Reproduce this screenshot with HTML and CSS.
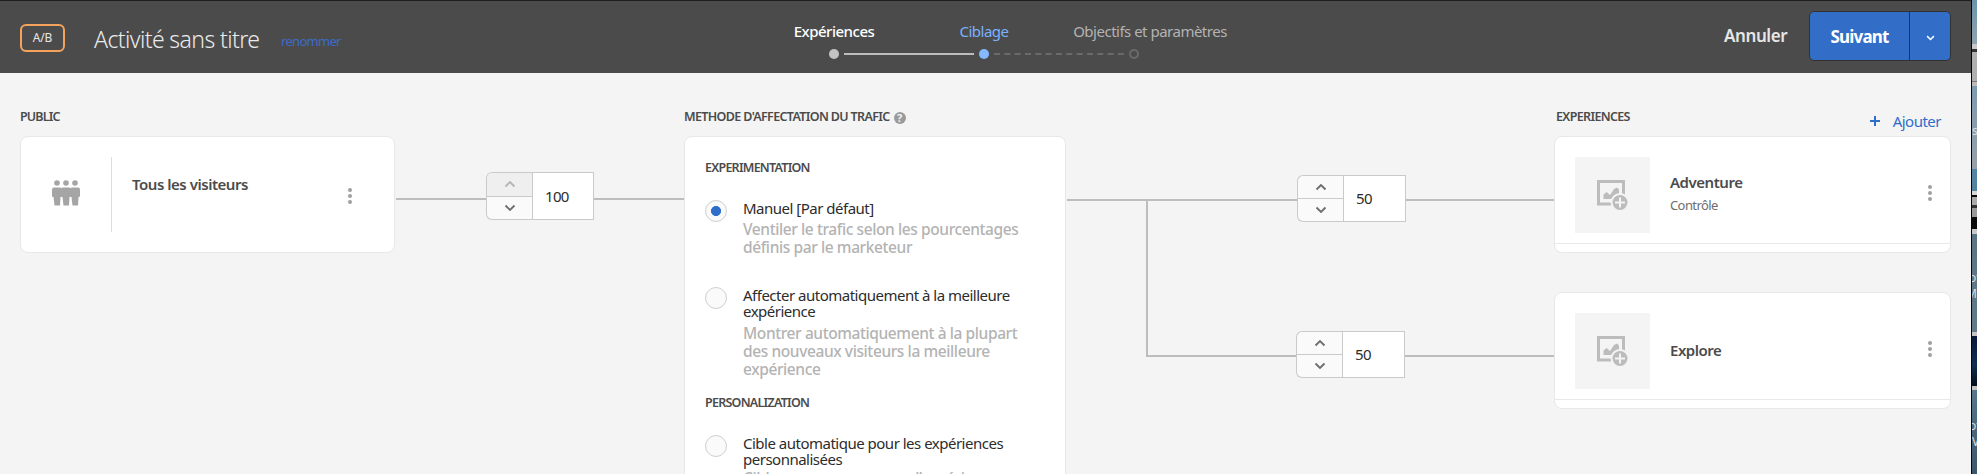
FILE: index.html
```html
<!DOCTYPE html>
<html lang="fr">
<head>
<meta charset="utf-8">
<title>Activité sans titre</title>
<link rel="stylesheet" href="styles.css">
</head>
<body>
<svg class="defs" width="0" height="0">
  <symbol id="up" viewBox="0 0 12 8"><path d="M1.5 6.5 6 2l4.500 4.500" fill="none" stroke="currentColor" stroke-width="1.900"/></symbol>
  <symbol id="down" viewBox="0 0 12 8"><path d="M1.500 1.500 6 6l4.500-4.500" fill="none" stroke="currentColor" stroke-width="1.900"/></symbol>
  <symbol id="more" viewBox="0 0 4 16"><circle cx="2" cy="2" r="2"/><circle cx="2" cy="8" r="2"/><circle cx="2" cy="14" r="2"/></symbol>
  <symbol id="person" viewBox="0 0 10 26"><circle cx="5" cy="3" r="2.800"/><path d="M2 7.500h6q2 0 2 2V16q0 1-1.500 1L8 25.500H2.500L1.500 17Q0 17 0 16V9.500q0-2 2-2z"/></symbol>
  <symbol id="image-add" viewBox="0 0 32 32">
    <path d="M2.500 2.500h25v22.500h-25z" fill="none" stroke="#bcbcbc" stroke-width="3"/>
    <path d="M7.500 20v-4.500l3-2.500 3.500 3 4-6 3-1.500 2 2V20z" fill="#bcbcbc"/>
    <circle cx="24" cy="23.500" r="9.500" fill="#f4f4f4"/>
    <circle cx="24" cy="23.500" r="7.500" fill="#bcbcbc"/>
    <path d="M24 18.500v10M19 23.500h10" stroke="#f4f4f4" stroke-width="2"/>
  </symbol>
</svg>
<div class="screen">
  <div class="app">
    <header class="header">
      <span class="badge">A/B</span>
      <h1 class="title">Activité sans titre</h1>
      <a class="rename">renommer</a>
      <nav class="steps">
        <div class="step done"><span>Expériences</span></div>
        <div class="step current"><span>Ciblage</span></div>
        <div class="step next"><span>Objectifs et paramètres</span></div>
        <svg class="track" width="310" height="10" viewBox="0 0 310 10">
          <circle cx="5" cy="5" r="5" fill="#c3c3c3"/>
          <path d="M15 5h130" stroke="#bdbdbd" stroke-width="2"/>
          <circle cx="155" cy="5" r="5" fill="#85b9ff"/>
          <path d="M165 5h130" stroke="#6a6a6a" stroke-width="2" stroke-dasharray="6 4.330"/>
          <circle cx="305" cy="5" r="4" fill="none" stroke="#6a6a6a" stroke-width="2"/>
        </svg>
      </nav>
      <a class="cancel">Annuler</a>
      <div class="split">
        <button class="go">Suivant</button>
        <button class="drop"><svg width="9" height="6"><use href="#down"/></svg></button>
      </div>
    </header>

    <main class="flow">
      <section class="col audience">
        <h2 class="head short">PUBLIC</h2>
        <div class="card people">
          <div class="people-icon">
            <svg width="28" height="26" viewBox="0 0 28 26" fill="#a5a5a5"><use href="#person" x="0" width="10" height="26"/><use href="#person" x="9" width="10" height="26"/><use href="#person" x="18" width="10" height="26"/></svg>
          </div>
          <div class="name">Tous les visiteurs</div>
          <svg class="more" width="4" height="16"><use href="#more"/></svg>
        </div>
      </section>

      <div class="link first">
        <i class="line"></i>
        <div class="stepper">
          <div class="arrows">
            <span class="off"><svg width="12" height="8"><use href="#up"/></svg></span>
            <span><svg width="12" height="8"><use href="#down"/></svg></span>
          </div>
          <div class="value">100</div>
        </div>
        <i class="line"></i>
      </div>

      <section class="col method">
        <h2 class="head">METHODE D'AFFECTATION DU TRAFIC <span class="help">?</span></h2>
        <div class="card options">
          <h3 class="group">EXPERIMENTATION</h3>
          <div class="option">
            <span class="radio on"></span>
            <div>
              <p class="label">Manuel [Par défaut]</p>
              <p class="desc">Ventiler le trafic selon les pourcentages<br>définis par le marketeur</p>
            </div>
          </div>
          <div class="option second">
            <span class="radio"></span>
            <div>
              <p class="label">Affecter automatiquement à la meilleure<br>expérience</p>
              <p class="desc">Montrer automatiquement à la plupart<br>des nouveaux visiteurs la meilleure<br>expérience</p>
            </div>
          </div>
          <h3 class="group later">PERSONALIZATION</h3>
          <div class="option third">
            <span class="radio"></span>
            <div>
              <p class="label">Cible automatique pour les expériences<br>personnalisées</p>
              <p class="desc">Cible par personne avec l’expérience</p>
            </div>
          </div>
        </div>
      </section>

      <div class="fork">
        <i class="trunk"></i>
        <div class="branches">
          <div class="link top">
            <i class="line"></i>
            <div class="stepper">
              <div class="arrows">
                <span><svg width="12" height="8"><use href="#up"/></svg></span>
                <span><svg width="12" height="8"><use href="#down"/></svg></span>
              </div>
              <div class="value">50</div>
            </div>
            <i class="line"></i>
          </div>
          <div class="link bottom">
            <i class="line"></i>
            <div class="stepper">
              <div class="arrows">
                <span><svg width="12" height="8"><use href="#up"/></svg></span>
                <span><svg width="12" height="8"><use href="#down"/></svg></span>
              </div>
              <div class="value">50</div>
            </div>
            <i class="line"></i>
          </div>
        </div>
      </div>

      <section class="col experiences">
        <div class="bar">
          <h2 class="head">EXPERIENCES</h2>
          <a class="add"><svg width="10" height="10" viewBox="0 0 10 10"><path d="M5 0v10M0 5h10" stroke="#2f6dca" stroke-width="2"/></svg>Ajouter</a>
        </div>
        <div class="card exp">
          <div class="exp-body">
            <div class="thumb"><svg width="32" height="32"><use href="#image-add"/></svg></div>
            <div class="exp-text"><div class="name">Adventure</div><div class="sub">Contrôle</div></div>
            <svg class="more" width="4" height="16"><use href="#more"/></svg>
          </div>
        </div>
        <div class="card exp">
          <div class="exp-body">
            <div class="thumb"><svg width="32" height="32"><use href="#image-add"/></svg></div>
            <div class="exp-text single"><div class="name">Explore</div></div>
            <svg class="more" width="4" height="16"><use href="#more"/></svg>
          </div>
        </div>
      </section>
    </main>
  </div>
  <aside class="desktop">
    <span class="glyph g1">s</span>
    <span class="glyph g2">of</span>
    <span class="glyph g3">M</span>
    <span class="glyph g4">of</span>
    <span class="glyph g5">V</span>
  </aside>
</div>
</body>
</html>
```
FILE: styles.css
```css
* { box-sizing: border-box; }
body { margin: 0; height: 474px; overflow: hidden; font-family: "Noto Sans", "Open Sans", sans-serif; color: #4b4b4b; }
h1, h2, h3, p { margin: 0; }
button { border: 0; padding: 0; font-family: inherit; }
svg { display: block; }
.defs { position: absolute; }
.screen { display: flex; height: 474px; overflow: hidden; white-space: nowrap; }
.app { width: 1971px; flex: none; background: #f4f4f4; }

.header { display: flex; align-items: flex-start; height: 73px; padding-left: 20px; border-top: 1px solid #1e1e1e; background: #4b4b4b; }
.badge { width: 45px; height: 28px; margin-top: 23px; border: 2px solid #f5a35c; border-radius: 6px; text-align: center; font-size: 12px; letter-spacing: -0.2px; line-height: 24px; color: #e6e6e6; }
.title { width: 187px; margin-left: 29px; font-size: 23px; font-weight: 300; letter-spacing: -0.6px; line-height: 76px; color: #eaeaea; }
.rename { width: 60px; margin-top: 2px; font-size: 13px; letter-spacing: -0.7px; line-height: 77px; color: #3b6cc9; }
.steps { display: grid; grid-template-columns: 150px 150px 182px; width: 482px; margin: 19px 0 0 418px; font-size: 15px; letter-spacing: -0.5px; line-height: 23px; text-align: center; }
.step.done { font-weight: 500; color: #fff; }
.step.current { color: #7ab2ff; }
.step.next { color: #b3b3b3; }
.track { margin: 6px 0 0 70px; }
.cancel { width: 85px; margin-left: 483px; font-size: 17px; font-weight: 600; letter-spacing: -0.4px; line-height: 70px; color: #e6e6e6; }
.split { display: flex; width: 142px; height: 50px; margin-top: 10px; border: 1px solid #323232; border-radius: 5px; overflow: hidden; background: #326ec8; }
.go { width: 100px; background: none; border-right: 1px solid #323232; font-size: 17px; font-weight: 700; letter-spacing: -0.8px; color: #fff; }
.drop { flex: 1; display: grid; place-items: center; padding-top: 4px; background: none; color: #fff; }

.flow { display: flex; height: 401px; padding-left: 20px; }
.col { flex: none; padding-top: 33px; }
.head { display: flex; align-items: center; height: 22px; font-size: 12.5px; font-weight: 600; letter-spacing: -0.65px; line-height: 22px; }
.short { letter-spacing: -0.85px; }
.card { border: 1px solid #e8e8e8; border-radius: 8px; background: #fff; }
.name { font-size: 15px; font-weight: 600; letter-spacing: -0.47px; line-height: 20px; }
.more { fill: #a0a0a0; }

.audience { width: 375px; }
.people { display: flex; height: 117px; margin-top: 8px; }
.people-icon { width: 91px; height: 75px; margin-top: 20px; padding: 23px 0 0 31px; border-right: 1px solid #ddd; }
.people .name { width: 216px; margin: 37px 0 0 20px; }
.people .more { margin-top: 51px; }

.link { display: flex; align-items: center; }
.line { flex: 1; height: 2px; background: #bdbdbd; }
.first { width: 289px; height: 48px; margin-top: 99px; padding-left: 1px; }
.first .line { position: relative; top: 3px; }
.first .line:last-child { flex: 0 0 90px; }
.stepper { display: flex; width: 108px; height: 48px; }
.arrows { width: 46px; display: flex; flex-direction: column; border: 1px solid #cacaca; border-right: 0; border-radius: 6px 0 0 6px; background: #fafafa; overflow: hidden; color: #6e6e6e; }
.arrows span { flex: 1; display: grid; place-items: center; }
.arrows span + span { border-top: 1px solid #cacaca; }
.arrows .off { background: #efefef; color: #b5b5b5; }
.value { flex: 1; padding-left: 12px; border: 1px solid #cacaca; background: #fff; font-size: 15px; letter-spacing: -0.7px; line-height: 47px; color: #2c2c2c; }
.fork .value { line-height: 45px; }

.method { width: 382px; }
.help { width: 12px; height: 12px; margin: 1px 0 0 4px; border-radius: 50%; background: #9b9b9b; color: #f4f4f4; font-size: 11px; font-weight: 700; letter-spacing: 0; line-height: 12px; text-align: center; }
.options { height: 420px; margin-top: 8px; padding: 20px 20px 0; }
.group { height: 20px; font-size: 12.5px; font-weight: 600; letter-spacing: -0.75px; line-height: 22px; }
.later { margin-top: 14px; }
.option { display: flex; margin-top: 23px; }
.second { margin-top: 31px; }
.radio { flex: none; width: 22px; height: 22px; margin-right: 16px; border: 1px solid #cfcfcf; border-radius: 50%; background: #fafafa; }
.radio.on { background: radial-gradient(circle, #2f6dca 4.700px, #fafafa 5.300px); }
.label { font-size: 15px; line-height: 16px; letter-spacing: -0.5px; color: #2c2c2c; }
.desc { margin-top: 4px; font-size: 15.5px; font-weight: 500; letter-spacing: -0.4px; line-height: 18px; color: #b3b3b3; }
.second .desc { margin-top: 5px; }
.third .desc { margin-top: 2px; }

.fork { display: flex; width: 488px; padding-left: 1px; }
.trunk { width: 79px; height: 2px; margin-top: 126px; background: #bdbdbd; }
.branches { flex: 1; height: 158px; margin-top: 126px; border-left: 2px solid #bdbdbd; }
.fork .stepper { width: 109px; height: 47px; }
.fork .line:last-child { flex: 0 0 148px; }
.top { height: 2px; }
.top .stepper { margin-top: -3px; }
.bottom { height: 2px; margin-top: 154px; }
.bottom .stepper { margin-top: -3px; }
.bottom .line:last-child { flex-basis: 149px; }

.experiences { width: 397px; }
.bar { display: flex; justify-content: space-between; height: 30px; padding: 0 10px 0 2px; }
.add { display: flex; align-items: center; gap: 13px; height: 30px; font-size: 15px; letter-spacing: -0.5px; line-height: 28px; color: #2f6dca; }
.exp { height: 117px; margin-bottom: 39px; }
.exp-body { display: flex; height: 107px; padding: 20px 0 0 20px; border-bottom: 1px solid #e8e8e8; }
.thumb { flex: none; width: 75px; height: 76px; padding: 22px 0 0 21px; background: #f4f4f4; }
.exp-text { flex: none; width: 258px; padding: 15px 0 0 20px; }
.exp-text.single { padding-top: 27px; }
.sub { margin-top: 4px; font-size: 13px; letter-spacing: -0.6px; line-height: 18px; color: #6e6e6e; }
.exp .more { flex: none; margin: 28px 0 0 20px; }

.desktop { position: relative; width: 6px; overflow: hidden; border-left: 1px solid #050505; color: #ddd; font-size: 12px; line-height: 14px;
  background: linear-gradient(#6b93ad 0, #8fa3ae 44px, #c8c8c8 44px, #c8c8c8 49px, #333 49px, #333 52px, #b0b0b0 52px, #b0b0b0 81px, #777 81px, #777 82px, #bbb 82px, #bbb 86px, #7d9bb0 86px, #98a1a9 169px, #5585a5 169px, #55829d 191px, #d8d8d8 191px, #d8d8d8 195px, #080808 195px, #080808 197px, #aaa 197px, #aaa 205px, #333 205px, #333 208px, #999 208px, #999 217px, #0b0b0b 217px, #0b0b0b 229px, #c8c8c8 229px, #c8c8c8 234px, #5b7485 234px, #637a88 332px, #c4c4c4 332px, #c4c4c4 336px, #071a38 336px, #102d52 365px, #050d1b 386px, #c4c4c4 386px, #c4c4c4 390px, #57778c 390px, #3c566b 474px); }
.glyph { position: absolute; left: 0; }
.g1 { top: 124px; }
.g2 { left: -3px; top: 271px; }
.g3 { left: -6px; top: 287px; }
.g4 { left: -3px; top: 419px; }
.g5 { top: 435px; }
```
